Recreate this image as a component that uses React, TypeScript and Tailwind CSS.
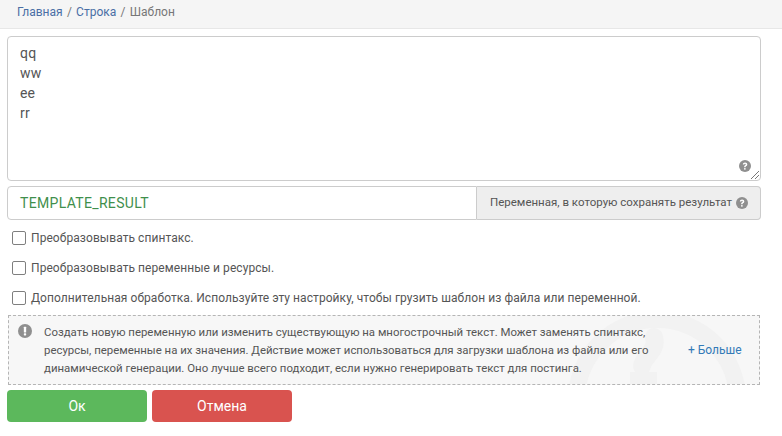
import React from "react";

function Q({ className }: { className?: string }) {
  return (
    <svg viewBox="0 0 24 24" className={className}>
      <circle cx="12" cy="12" r="12" fill="currentColor" />
      <path d="M7.600 9.200C7.800 6.600 9.600 5 12.200 5c2.600 0 4.400 1.600 4.400 3.800 0 1.700-.9 2.600-2.100 3.400-1 .7-1.300 1.100-1.300 2.100v.4h-3v-.7c0-1.600.6-2.500 1.900-3.400.9-.6 1.300-1 1.300-1.700 0-.8-.6-1.300-1.300-1.300-.9 0-1.400.6-1.500 1.600H7.600z" fill="#fff" />
      <rect x="10.200" y="16.200" width="3" height="3" fill="#fff" />
    </svg>
  );
}

function Check({ label }: { label: string }) {
  return (
    <label className="flex h-[30px] items-center gap-[5px] pl-[5px] text-[12px] tracking-[0.07px] text-[#555]">
      <span className="h-[14px] w-[14px] shrink-0 rounded-[2px] border border-[#7f7f7f] bg-white" />
      <span>{label}</span>
    </label>
  );
}

export default function App() {
  return (
    <div className="h-[436px] w-[782px] overflow-hidden bg-white font-['Roboto','Liberation_Sans',sans-serif]">
      <div className="flex h-[29px] items-center gap-[4.25px] border-b border-[#e7e7e7] bg-[#f5f5f5] pb-[5px] pl-[17px] text-[12px] text-[#777]">
        <a className="text-[#4a6fa5]">Главная</a>
        <span className="text-[#777]">/</span>
        <a className="text-[#4a6fa5]">Строка</a>
        <span>/</span>
        <span>Шаблон</span>
      </div>
      <div className="px-[7px] pt-[7px]">
        <div className="relative h-[145px] w-[754px] rounded-[4px] border border-[#ccc] bg-white px-[12px] py-[6px] text-[14px] leading-[20px] tracking-[0.2px] text-[#555]">
          <div>qq</div>
          <div>ww</div>
          <div>ee</div>
          <div>rr</div>
          <Q className="absolute right-[9px] bottom-[8px] h-[12px] w-[12px] text-[#8f8f8f]" />
          <svg viewBox="0 0 12 12" className="absolute right-0 bottom-0 h-[12px] w-[12px] text-[#777]">
            <path d="M11 3 3 11M11 7 7 11" stroke="currentColor" strokeWidth="1" fill="none" />
          </svg>
        </div>
        <div className="mt-[5px] flex h-[34px] w-[754px]">
          <div className="flex flex-1 items-center rounded-l-[4px] border border-[#ccc] bg-white px-[12px] text-[14px] tracking-[0.33px] text-[#3f8f4c]">
            TEMPLATE_RESULT
          </div>
          <div className="flex w-[284px] items-center gap-[4px] rounded-r-[4px] border border-l-0 border-[#ccc] bg-[#eee] pl-[13px] text-[11.5px] text-[#555]">
            Переменная, в которую сохранять результат
            <Q className="h-[12px] w-[12px] text-[#8f8f8f]" />
          </div>
        </div>
        <div className="mt-[3px]">
          <Check label="Преобразовывать спинтакс." />
          <Check label="Преобразовывать переменные и ресурсы." />
          <Check label="Дополнительная обработка. Используйте эту настройку, чтобы грузить шаблон из файла или переменной." />
        </div>
        <div className="relative mt-[2px] ml-[1px] flex h-[70px] w-[752px] overflow-hidden border border-dashed border-[#b5b5b5] bg-[#f7f7f7] pt-[7px] pl-[9px] text-[12px] leading-[18px] text-[#555]">
          <svg viewBox="0 0 178 178" className="absolute top-[-5px] left-[559px] h-[178px] w-[178px] text-[#f2f2f2]">
            <circle cx="89" cy="89" r="80.500" stroke="currentColor" strokeWidth="17" fill="none" />
            <path d="M86 26C90 40 76 44 74 55" stroke="currentColor" strokeWidth="18" strokeLinecap="round" fill="none" />
            <rect x="62" y="61" width="27" height="27" fill="currentColor" />
          </svg>
          <svg viewBox="0 0 24 24" className="relative mt-[1px] h-[14px] w-[14px] shrink-0 text-[#8f8f8f]">
            <circle cx="12" cy="12" r="12" fill="currentColor" />
            <rect x="10" y="4.500" width="4" height="10" rx="1" fill="#fff" />
            <rect x="10" y="16" width="4" height="3.500" rx="1" fill="#fff" />
          </svg>
          <div className="relative ml-[12px] w-[615px] text-[11.42px]">
            Создать новую переменную или изменить существующую на многострочный текст. Может заменять спинтакс, ресурсы, переменные на их значения. Действие может использоваться для загрузки шаблона из файла или его динамической генерации. Оно лучше всего подходит, если нужно генерировать текст для постинга.
          </div>
          <a className="relative ml-[29px] self-center pb-[7px] text-[#337ab7]">+ Больше</a>
        </div>
        <div className="mt-[5px] flex gap-[5px]">
          <button className="h-[32px] w-[140px] rounded-[4px] bg-[#5cb85c] text-[14px] text-white">Ок</button>
          <button className="h-[32px] w-[140px] rounded-[4px] bg-[#d9534f] text-[14px] text-white">Отмена</button>
        </div>
      </div>
    </div>
  );
}
